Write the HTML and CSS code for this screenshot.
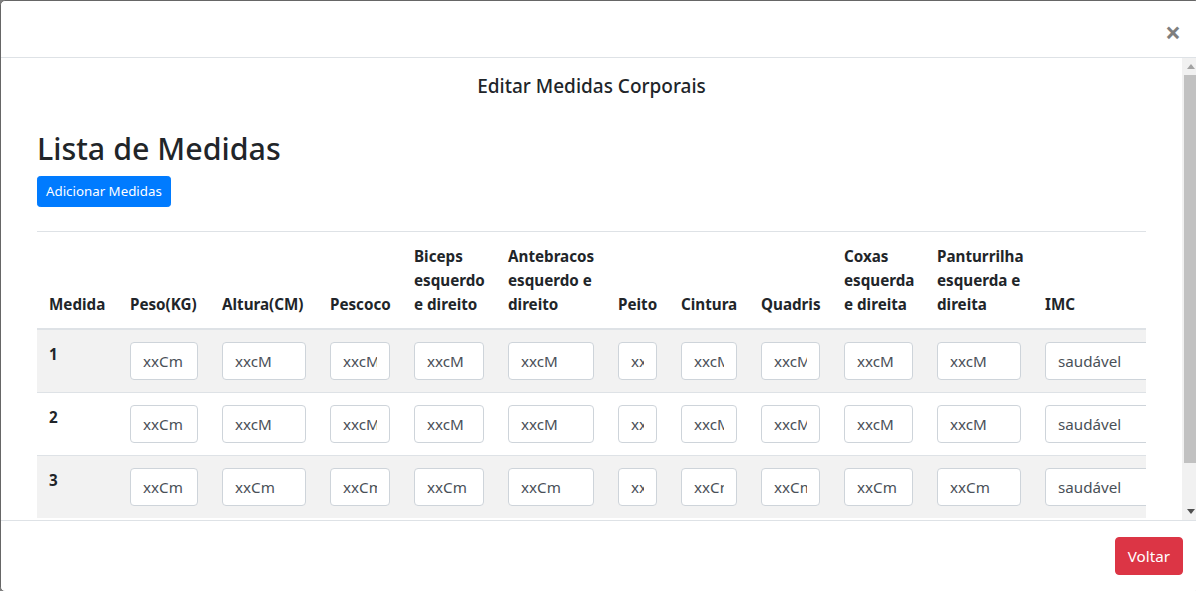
FILE: index.html
```html
<!DOCTYPE html>
<html lang="pt-BR">
<head>
<meta charset="utf-8">
<title>Editar Medidas Corporais</title>
<link rel="stylesheet" href="styles.css">
</head>
<body>
<div class="modal">
  <div class="modal-header">
    <button class="close" type="button" aria-label="Fechar">×</button>
  </div>
  <div class="modal-main">
    <div class="modal-body">
      <h5 class="modal-title">Editar Medidas Corporais</h5>
      <h1 class="page-title">Lista de Medidas</h1>
      <button class="btn btn-primary btn-sm" type="button">Adicionar Medidas</button>
      <div class="table-responsive">
        <table class="table">
          <colgroup>
            <col class="c-medida"><col class="c-peso"><col class="c-altura"><col class="c-pescoco">
            <col class="c-biceps"><col class="c-antebracos"><col class="c-peito"><col class="c-cintura">
            <col class="c-quadris"><col class="c-coxas"><col class="c-panturrilha"><col class="c-imc">
          </colgroup>
          <thead>
            <tr>
              <th>Medida</th><th>Peso(KG)</th><th>Altura(CM)</th><th>Pescoco</th>
              <th>Biceps esquerdo e direito</th><th>Antebracos esquerdo e direito</th>
              <th>Peito</th><th>Cintura</th><th>Quadris</th>
              <th>Coxas esquerda e direita</th><th>Panturrilha esquerda e direita</th><th>IMC</th>
            </tr>
          </thead>
          <tbody>
            <tr>
              <th>1</th>
              <td><input class="form-control" value="xxCm"></td>
              <td><input class="form-control" value="xxcM"></td>
              <td><input class="form-control" value="xxcM"></td>
              <td><input class="form-control" value="xxcM"></td>
              <td><input class="form-control" value="xxcM"></td>
              <td><input class="form-control" value="xxcM"></td>
              <td><input class="form-control" value="xxcM"></td>
              <td><input class="form-control" value="xxcM"></td>
              <td><input class="form-control" value="xxcM"></td>
              <td><input class="form-control" value="xxcM"></td>
              <td><input class="form-control" value="saudável"></td>
            </tr>
            <tr>
              <th>2</th>
              <td><input class="form-control" value="xxCm"></td>
              <td><input class="form-control" value="xxcM"></td>
              <td><input class="form-control" value="xxcM"></td>
              <td><input class="form-control" value="xxcM"></td>
              <td><input class="form-control" value="xxcM"></td>
              <td><input class="form-control" value="xxcM"></td>
              <td><input class="form-control" value="xxcM"></td>
              <td><input class="form-control" value="xxcM"></td>
              <td><input class="form-control" value="xxcM"></td>
              <td><input class="form-control" value="xxcM"></td>
              <td><input class="form-control" value="saudável"></td>
            </tr>
            <tr>
              <th>3</th>
              <td><input class="form-control" value="xxCm"></td>
              <td><input class="form-control" value="xxCm"></td>
              <td><input class="form-control" value="xxCm"></td>
              <td><input class="form-control" value="xxCm"></td>
              <td><input class="form-control" value="xxCm"></td>
              <td><input class="form-control" value="xxCm"></td>
              <td><input class="form-control" value="xxCm"></td>
              <td><input class="form-control" value="xxCm"></td>
              <td><input class="form-control" value="xxCm"></td>
              <td><input class="form-control" value="xxCm"></td>
              <td><input class="form-control" value="saudável"></td>
            </tr>
          </tbody>
        </table>
      </div>
    </div>
    <div class="scrollbar" aria-hidden="true">
      <div class="sb-btn">
        <svg width="8" height="5" viewBox="0 0 8 5"><polygon points="0,5 8,5 4,0" fill="#a3a3a3"/></svg>
      </div>
      <div class="sb-track"><div class="sb-thumb"></div></div>
      <div class="sb-btn">
        <svg width="8" height="5" viewBox="0 0 8 5"><polygon points="0,0 8,0 4,5" fill="#505050"/></svg>
      </div>
    </div>
  </div>
  <div class="modal-footer">
    <button class="btn btn-danger" type="button">Voltar</button>
  </div>
</div>
</body>
</html>
```
FILE: styles.css
```css
html, body {
  margin: 0;
  padding: 0;
  overflow: hidden;
  background: #808080;
}
body {
  font-family: "Noto Sans", "Open Sans", sans-serif;
  font-size: 15.2px;
  line-height: 24px;
  color: #212529;
}
.modal {
  width: 1200px;
  height: 592px;
  box-sizing: border-box;
  background: #fff;
  border: 1px solid #666;
  border-radius: 4.8px;
  display: flex;
  flex-direction: column;
}
.modal-header {
  height: 56px;
  flex: none;
  border-bottom: 1px solid #dee2e6;
  display: flex;
  align-items: center;
  justify-content: flex-end;
  padding: 0 18px 0 16px;
}
.close {
  background: none;
  border: 0;
  padding: 0;
  margin-top: 6px;
  font-family: inherit;
  font-size: 28px;
  font-weight: 700;
  line-height: 1;
  color: #000;
  opacity: .5;
}
.modal-main {
  height: 462px;
  flex: none;
  display: flex;
}
.modal-body {
  flex: 1;
  min-width: 0;
  box-sizing: border-box;
  overflow: hidden;
  padding: 16px 36px;
}
.scrollbar {
  width: 17px;
  flex: none;
  background: #f1f1f1;
  display: flex;
  flex-direction: column;
}
.sb-btn {
  height: 17px;
  flex: none;
  display: flex;
  align-items: center;
  justify-content: center;
}
.sb-btn svg {
  display: block;
}
.sb-track {
  flex: 1;
  padding: 0 2px;
}
.sb-thumb {
  height: 388px;
  background: #c1c1c1;
}
.modal-title {
  margin: 0 0 32px;
  text-align: center;
  font-size: 19px;
  font-weight: 500;
  line-height: 24px;
}
.page-title {
  margin: 0 0 8px;
  font-size: 30.4px;
  font-weight: 500;
  line-height: 38px;
}
.btn {
  display: inline-block;
  font-family: inherit;
  font-weight: 400;
  border: 1px solid transparent;
  color: #fff;
  cursor: pointer;
}
.btn-sm {
  font-size: 13.3px;
  line-height: 21px;
  padding: 4px 8px;
  border-radius: 3.2px;
}
.btn-primary {
  background: #007bff;
  border-color: #007bff;
}
.btn-danger {
  background: #dc3545;
  border-color: #dc3545;
  font-size: 15.2px;
  line-height: 24px;
  padding: 6px 12px;
  border-radius: 4px;
}
.table-responsive {
  margin-top: 24px;
  overflow: hidden;
}
.table {
  width: 1196px;
  table-layout: fixed;
  border-collapse: collapse;
  color: #212529;
}
.c-medida { width: 81px; }
.c-peso { width: 92px; }
.c-altura { width: 108px; }
.c-pescoco { width: 84px; }
.c-biceps { width: 94px; }
.c-antebracos { width: 110px; }
.c-peito { width: 63px; }
.c-cintura { width: 80px; }
.c-quadris { width: 83px; }
.c-coxas { width: 93px; }
.c-panturrilha { width: 108px; }
.c-imc { width: 200px; }
.table th, .table td {
  padding: 12px;
  text-align: left;
  vertical-align: top;
  border-top: 1px solid #dee2e6;
}
.table th {
  font-weight: 700;
}
.table thead th {
  vertical-align: bottom;
  border-bottom: 2px solid #dee2e6;
}
.table tbody tr:nth-of-type(odd) {
  background: #f2f2f2;
}
.form-control {
  display: block;
  width: 100%;
  box-sizing: border-box;
  height: 38px;
  margin: 0;
  padding: 6px 12px;
  font-family: inherit;
  font-size: 15.2px;
  line-height: 24px;
  color: #495057;
  background: #fff;
  border: 1px solid #ced4da;
  border-radius: 4px;
}
.modal-footer {
  flex: 1;
  border-top: 1px solid #dee2e6;
  display: flex;
  justify-content: flex-end;
  align-items: flex-start;
  padding: 16px 16px 0;
}
```
